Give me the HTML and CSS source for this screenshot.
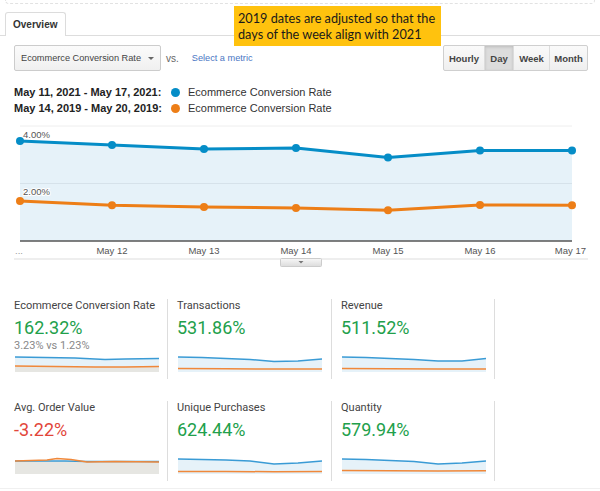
FILE: index.html
```html
<!DOCTYPE html>
<html>
<head>
<meta charset="utf-8">
<link rel="stylesheet" href="styles.css">
</head>
<body>
<div class="page">
  <div class="topedge"></div>
  <div class="tabbar">
    <div class="tab">Overview</div>
  </div>
  <div class="note">2019 dates are adjusted so that the<br>days of the week align with 2021</div>

  <div class="controls">
    <div class="metricpick">
      <div class="dropdown"><span>Ecommerce Conversion Rate</span><span class="caret"></span></div>
      <span class="vs">vs.</span>
      <span class="select">Select a metric</span>
    </div>
    <div class="btngroup">
      <div class="btn w-hourly">Hourly</div>
      <div class="btn w-day active">Day</div>
      <div class="btn w-week">Week</div>
      <div class="btn w-month">Month</div>
    </div>
  </div>

  <div class="legend">
    <div class="lrow"><span class="ldate">May 11, 2021 - May 17, 2021:</span><span class="dot blue"></span><span>Ecommerce Conversion Rate</span></div>
    <div class="lrow"><span class="ldate">May 14, 2019 - May 20, 2019:</span><span class="dot orange"></span><span>Ecommerce Conversion Rate</span></div>
  </div>

  <svg class="chart" width="600" height="150" viewBox="0 0 600 150">
    <defs>
      <linearGradient id="hg" x1="0" y1="0" x2="0" y2="1">
        <stop offset="0" stop-color="#f7f7f7"/>
        <stop offset="1" stop-color="#dcdcdc"/>
      </linearGradient>
    </defs>
    <line x1="20" y1="6" x2="572" y2="6" stroke="#eeeeee" stroke-width="1"/>
    <polygon points="20,21 112,25 204,29 296,28 388,37.5 480,30.5 572,30.5 572,121 20,121" fill="#e6f2f9"/>
    <line x1="20" y1="63.5" x2="572" y2="63.5" stroke="#d6e2ea" stroke-width="1"/>
    <line x1="20" y1="121" x2="572" y2="121" stroke="#555" stroke-width="1.5"/>
    <text class="ylab" x="23" y="17.5">4.00%</text>
    <text class="ylab" x="23" y="74.5">2.00%</text>
    <polyline points="20,21 112,25 204,29 296,28 388,37.5 480,30.5 572,30.5" fill="none" stroke="#058dc7" stroke-width="3" stroke-linejoin="round"/>
    <g fill="#058dc7">
      <circle cx="20" cy="21" r="4"/><circle cx="112" cy="25" r="4"/><circle cx="204" cy="29" r="4"/><circle cx="296" cy="28" r="4"/><circle cx="388" cy="37.5" r="4"/><circle cx="480" cy="30.5" r="4"/><circle cx="572" cy="30.5" r="4"/>
    </g>
    <polyline points="20,81 112,85.3 204,87 296,88 388,90.3 480,85 572,85.3" fill="none" stroke="#ed7e17" stroke-width="3" stroke-linejoin="round"/>
    <g fill="#ed7e17">
      <circle cx="20" cy="81" r="4"/><circle cx="112" cy="85.3" r="4"/><circle cx="204" cy="87" r="4"/><circle cx="296" cy="88" r="4"/><circle cx="388" cy="90.3" r="4"/><circle cx="480" cy="85" r="4"/><circle cx="572" cy="85.3" r="4"/>
    </g>
    <text class="xlab dots" x="15" y="134">...</text>
    <text class="xlab" x="112" y="134" text-anchor="middle">May 12</text>
    <text class="xlab" x="204" y="134" text-anchor="middle">May 13</text>
    <text class="xlab" x="296" y="134" text-anchor="middle">May 14</text>
    <text class="xlab" x="388" y="134" text-anchor="middle">May 15</text>
    <text class="xlab" x="480" y="134" text-anchor="middle">May 16</text>
    <text class="xlab" x="586" y="134" text-anchor="end">May 17</text>
    <line x1="14" y1="139" x2="588" y2="139" stroke="#dddddd" stroke-width="1"/>
    <rect x="280.5" y="138.5" width="41" height="8" rx="1" fill="url(#hg)" stroke="#cccccc"/>
    <polygon points="298.5,141 303.5,141 301,143.5" fill="#777"/>
  </svg>

  <div class="metrics">
    <div class="card">
      <div class="mlabel">Ecommerce Conversion Rate</div>
      <div class="mvalue up">162.32%</div>
      <div class="msub">3.23% vs 1.23%</div>
      <svg class="spark" width="144" height="17" viewBox="0 0 144 17">
        <polygon points="0,2 30,2.5 60,3 90,4.5 110,4 144,3.5 144,17 0,17" fill="#e6f2f9"/>
        <polygon points="0,11 40,11.5 80,12 110,12 144,11.5 144,17 0,17" fill="#e6e6e2"/>
        <polyline points="0,2 30,2.5 60,3 90,4.5 110,4 144,3.5" fill="none" stroke="#3a9bd5" stroke-width="1.5"/>
        <polyline points="0,11 40,11.5 80,12 110,12 144,11.5" fill="none" stroke="#f0883a" stroke-width="1.5"/>
      </svg>
    </div>
    <div class="card">
      <div class="mlabel">Transactions</div>
      <div class="mvalue up">531.86%</div>
      <div class="msub"></div>
      <svg class="spark" width="144" height="17" viewBox="0 0 144 17">
        <polygon points="0,2 24,2.5 48,3.5 72,4.5 96,6.5 120,6 144,4 144,17 0,17" fill="#e6f2f9"/>
        <polyline points="0,2 24,2.5 48,3.5 72,4.5 96,6.5 120,6 144,4" fill="none" stroke="#3a9bd5" stroke-width="1.5"/>
        <polyline points="0,13.5 48,13.8 96,14 144,14" fill="none" stroke="#f0883a" stroke-width="1.5"/>
      </svg>
    </div>
    <div class="card last">
      <div class="mlabel">Revenue</div>
      <div class="mvalue up">511.52%</div>
      <div class="msub"></div>
      <svg class="spark" width="144" height="17" viewBox="0 0 144 17">
        <polygon points="0,2 24,2.5 48,3.5 72,4.5 96,6 120,6 144,3.5 144,17 0,17" fill="#e6f2f9"/>
        <polyline points="0,2 24,2.5 48,3.5 72,4.5 96,6 120,6 144,3.5" fill="none" stroke="#3a9bd5" stroke-width="1.5"/>
        <polyline points="0,13.5 48,13.8 96,14 144,14" fill="none" stroke="#f0883a" stroke-width="1.5"/>
      </svg>
    </div>

    <div class="card">
      <div class="mlabel">Avg. Order Value</div>
      <div class="mvalue down">-3.22%</div>
      <div class="msub"></div>
      <svg class="spark" width="144" height="17" viewBox="0 0 144 17">
        <polygon points="0,4 144,4 144,17 0,17" fill="#e6e6e2"/>
        <polyline points="0,4 50,4 72,4.5 144,4.5" fill="none" stroke="#3a9bd5" stroke-width="1.5"/>
        <polyline points="0,4 32,3 42,1.5 56,2.5 72,5 100,4.5 144,5" fill="none" stroke="#f0883a" stroke-width="1.5"/>
      </svg>
    </div>
    <div class="card">
      <div class="mlabel">Unique Purchases</div>
      <div class="mvalue up">624.44%</div>
      <div class="msub"></div>
      <svg class="spark" width="144" height="17" viewBox="0 0 144 17">
        <polygon points="0,2 24,2.5 48,3 72,4 96,7 120,6 144,4 144,17 0,17" fill="#e6f2f9"/>
        <polyline points="0,2 24,2.5 48,3 72,4 96,7 120,6 144,4" fill="none" stroke="#3a9bd5" stroke-width="1.5"/>
        <polyline points="0,14.5 48,14.5 96,14.7 144,14.5" fill="none" stroke="#f0883a" stroke-width="1.5"/>
      </svg>
    </div>
    <div class="card last">
      <div class="mlabel">Quantity</div>
      <div class="mvalue up">579.94%</div>
      <div class="msub"></div>
      <svg class="spark" width="144" height="17" viewBox="0 0 144 17">
        <polygon points="0,2 24,2.5 48,3.5 72,4.5 96,7 120,6 144,4 144,17 0,17" fill="#e6f2f9"/>
        <polyline points="0,2 24,2.5 48,3.5 72,4.5 96,7 120,6 144,4" fill="none" stroke="#3a9bd5" stroke-width="1.5"/>
        <polyline points="0,13.5 48,13.8 96,14 144,13.8" fill="none" stroke="#f0883a" stroke-width="1.5"/>
      </svg>
    </div>
  </div>
  <div class="bottomline"></div>
</div>
</body>
</html>
```

FILE: styles.css
```css
* { box-sizing: border-box; }
html, body { margin: 0; padding: 0; background: #ffffff; }
body {
  width: 600px;
  height: 491px;
  overflow: hidden;
  font-family: "Liberation Sans", Arial, sans-serif;
  color: #333;
}
.page { position: relative; width: 600px; height: 491px; }

.topedge {
  height: 4px;
  margin: 0 5px;
  border: 1px dashed #e2e2e2;
  border-top: none;
  border-radius: 0 0 4px 4px;
}

.tabbar {
  margin-top: 8px;
  padding-left: 5px;
  border-bottom: 1px solid #dddddd;
  height: 24px;
}
.tab {
  width: 61px;
  height: 24px;
  border: 1px solid #dcdcdc;
  border-bottom: none;
  border-radius: 3px 3px 0 0;
  background: #ffffff;
  font-weight: bold;
  font-size: 10px;
  line-height: 23px;
  padding-left: 7px;
  color: #333;
}

.note {
  position: absolute;
  left: 234px;
  top: 6px;
  width: 207px;
  height: 40px;
  background: #ffc20e;
  color: #1a1a1a;
  font-family: Lato, "Liberation Sans", sans-serif;
  font-size: 12.7px;
  line-height: 16px;
  padding: 4px 0 0 4px;
}

.controls {
  display: flex;
  justify-content: space-between;
  align-items: center;
  margin-top: 9px;
  padding: 0 12px 0 14px;
  height: 26px;
}
.metricpick { display: flex; align-items: center; }
.dropdown {
  width: 147px;
  height: 26px;
  border: 1px solid #cccccc;
  border-radius: 2px;
  background: linear-gradient(#fbfbfb, #f0f0f0);
  display: flex;
  align-items: center;
  justify-content: space-between;
  padding: 0 6px 0 6px;
  font-size: 9.2px;
  color: #444;
}
.caret {
  width: 0; height: 0;
  border-left: 3px solid transparent;
  border-right: 3px solid transparent;
  border-top: 3px solid #666;
}
.vs { margin-left: 5px; font-size: 10px; color: #666; }
.select { margin-left: 13px; font-size: 9.2px; color: #4a76c4; }

.btngroup {
  display: flex;
  height: 26px;
  border: 1px solid #cfcfcf;
  border-radius: 2px;
  background: linear-gradient(#fafafa, #efefef);
}
.btn {
  font-size: 9.5px;
  font-weight: bold;
  color: #444;
  display: flex;
  align-items: center;
  justify-content: center;
  border-left: 1px solid #dcdcdc;
}
.btn:first-child { border-left: none; }
.btn.active { background: #dcdcdc; box-shadow: inset 0 1px 3px rgba(0,0,0,0.15); }
.w-hourly { width: 40px; }
.w-day { width: 29px; }
.w-week { width: 36px; }
.w-month { width: 38px; }

.legend { margin-top: 13px; padding-left: 14px; }
.lrow {
  display: flex;
  align-items: center;
  height: 16px;
  font-size: 11px;
  color: #333;
}
.ldate { width: 157px; font-weight: bold; color: #222; }
.dot {
  width: 9px; height: 9px; border-radius: 50%;
  margin-right: 8px;
}
.dot.blue { background: #058dc7; }
.dot.orange { background: #ed7e17; }

.chart { display: block; margin-top: 4px; }
.ylab { font-family: "Liberation Sans", Arial, sans-serif; font-size: 9.5px; fill: #555; paint-order: stroke; stroke: #ffffff; stroke-width: 2px; }
.xlab { font-family: "Liberation Sans", Arial, sans-serif; font-size: 9.5px; fill: #555; }
.xlab.dots { fill: #999; }

.metrics {
  display: grid;
  grid-template-columns: 153px 164px 164px;
  grid-auto-rows: 80px;
  row-gap: 22px;
  margin-top: 29px;
  margin-left: 14px;
  font-family: Roboto, "Liberation Sans", sans-serif;
}
.card { padding-left: 0; }
.card + .card { border-left: 1px solid #dddddd; padding-left: 9px; }
.card:nth-child(4) { border-left: none; padding-left: 0; }
.card.last { border-right: 1px solid #dddddd; }
.mlabel { font-size: 11px; line-height: 13px; color: #444; white-space: nowrap; }
.mvalue { font-size: 18px; line-height: 22px; margin-top: 5px; }
.mvalue.up { color: #22a04b; }
.mvalue.down { color: #e2463a; }
.msub { font-size: 11px; line-height: 13px; height: 13px; color: #888; }
.spark { display: block; margin-top: 3px; margin-left: 1px; }

.bottomline { margin-top: 7px; border-top: 1px solid #f0f0f0; }
```
